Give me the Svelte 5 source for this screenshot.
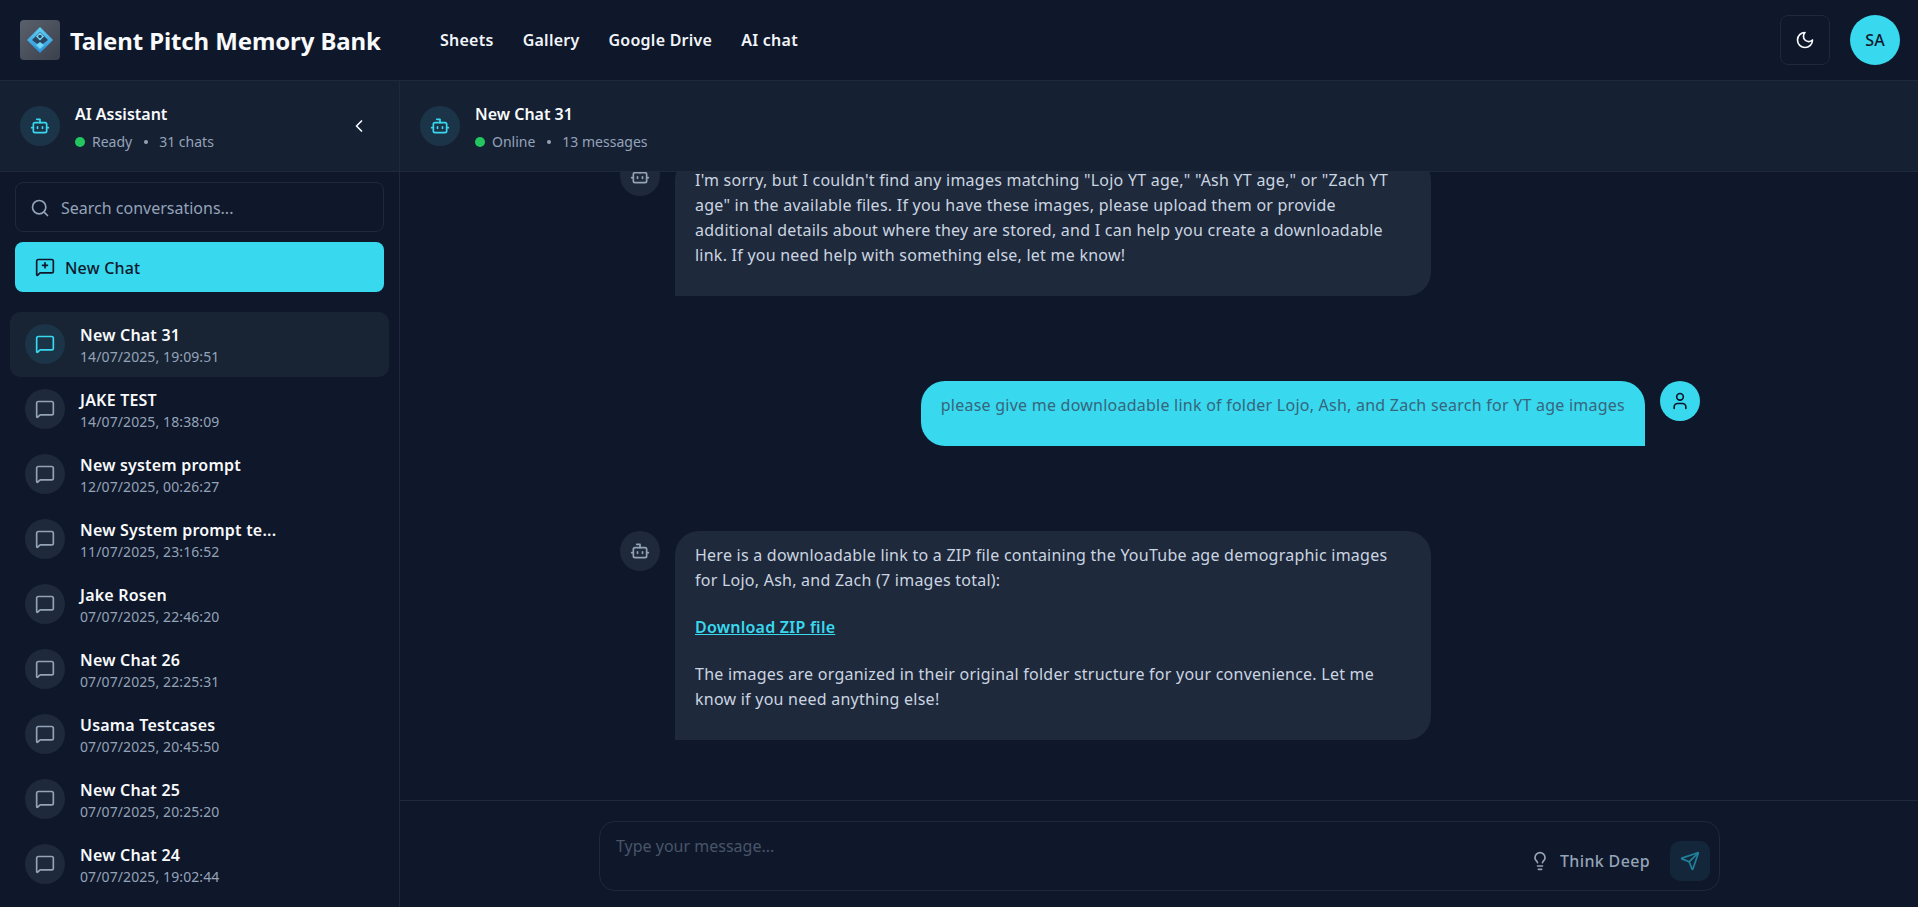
<script>
  const navLinks = ['Sheets', 'Gallery', 'Google Drive', 'AI chat'];

  const chats = [
    { title: 'New Chat 31', date: '14/07/2025, 19:09:51', active: true },
    { title: 'JAKE TEST', date: '14/07/2025, 18:38:09' },
    { title: 'New system prompt', date: '12/07/2025, 00:26:27' },
    { title: 'New System prompt te...', date: '11/07/2025, 23:16:52' },
    { title: 'Jake Rosen', date: '07/07/2025, 22:46:20' },
    { title: 'New Chat 26', date: '07/07/2025, 22:25:31' },
    { title: 'Usama Testcases', date: '07/07/2025, 20:45:50' },
    { title: 'New Chat 25', date: '07/07/2025, 20:25:20' },
    { title: 'New Chat 24', date: '07/07/2025, 19:02:44' }
  ];
</script>

{#snippet botIcon()}
  <svg class="icon" viewBox="0 0 24 24"><path d="M12 8V4H8" /><rect width="16" height="12" x="4" y="8" rx="2" /><path d="M2 14h2" /><path d="M20 14h2" /><path d="M15 13v2" /><path d="M9 13v2" /></svg>
{/snippet}

{#snippet chatIcon()}
  <svg class="icon" viewBox="0 0 24 24"><path d="M22 17a2 2 0 0 1-2 2H6.828a2 2 0 0 0-1.414.586l-2.202 2.202A.71.71 0 0 1 2 21.286V5a2 2 0 0 1 2-2h16a2 2 0 0 1 2 2z" /></svg>
{/snippet}

<div class="page">
  <header class="topbar">
    <div class="brand">
      <svg class="logo" viewBox="0 0 40 40">
        <defs>
          <linearGradient id="tile" x1="0" y1="0" x2="1" y2="1">
            <stop offset="0" stop-color="#5a616c" />
            <stop offset="1" stop-color="#3a414d" />
          </linearGradient>
          <linearGradient id="gem" x1="0" y1="0" x2="0" y2="1">
            <stop offset="0" stop-color="#5fd0f5" />
            <stop offset="1" stop-color="#2b8fd8" />
          </linearGradient>
        </defs>
        <rect width="40" height="40" rx="4" fill="url(#tile)" />
        <path d="M20 7 33 20 20 33 7 20Z" fill="url(#gem)" />
        <path d="M20 12 28 20 20 26 12 20Z" fill="#2b4560" />
        <path d="M20 22 24 25 20 29 16 25Z" fill="#6fd8f7" />
        <path d="M20 12.5 24 16.500 20 20.500 16 16.500Z" fill="#79dcf8" />
        <circle cx="20" cy="16.500" r="1.800" fill="#2b4560" />
      </svg>
      <span class="brand-name">Talent Pitch Memory Bank</span>
    </div>
    <nav class="nav">
      {#each navLinks as link}
        <span class="nav-link">{link}</span>
      {/each}
    </nav>
    <div class="top-actions">
      <button class="theme-btn" aria-label="Toggle theme">
        <svg class="icon" viewBox="0 0 24 24"><path d="M12 3a6 6 0 0 0 9 9 9 9 0 1 1-9-9Z" /></svg>
      </button>
      <div class="user-avatar">SA</div>
    </div>
  </header>

  <div class="body">
    <aside class="sidebar">
      <div class="panel-head">
        <div class="round accent">{@render botIcon()}</div>
        <div class="head-text">
          <div class="head-title">AI Assistant</div>
          <div class="head-meta"><i class="dot"></i>Ready<i class="sep"></i>31 chats</div>
        </div>
        <svg class="icon collapse" viewBox="0 0 24 24"><path d="m15 18-6-6 6-6" /></svg>
      </div>

      <div class="side-tools">
        <div class="search">
          <svg class="icon" viewBox="0 0 24 24"><path d="m21 21-4.340-4.340" /><circle cx="11" cy="11" r="8" /></svg>
          <span>Search conversations...</span>
        </div>
        <button class="new-chat">
          <svg class="icon" viewBox="0 0 24 24"><path d="M22 17a2 2 0 0 1-2 2H6.828a2 2 0 0 0-1.414.586l-2.202 2.202A.71.71 0 0 1 2 21.286V5a2 2 0 0 1 2-2h16a2 2 0 0 1 2 2z" /><path d="M12 7v6" /><path d="M9 10h6" /></svg>
          <span>New Chat</span>
        </button>
      </div>

      <ul class="chat-list">
        {#each chats as chat}
          <li class="chat-item" class:active={chat.active}>
            <div class="round" class:accent={chat.active}>{@render chatIcon()}</div>
            <div class="chat-text">
              <div class="chat-title">{chat.title}</div>
              <div class="chat-date">{chat.date}</div>
            </div>
          </li>
        {/each}
      </ul>
    </aside>

    <main class="main">
      <div class="panel-head">
        <div class="round accent">{@render botIcon()}</div>
        <div class="head-text">
          <div class="head-title">New Chat 31</div>
          <div class="head-meta"><i class="dot"></i>Online<i class="sep"></i>13 messages</div>
        </div>
      </div>

      <div class="messages">
        <div class="thread">
          <div class="msg">
            <div class="round">{@render botIcon()}</div>
            <div class="bubble">
              I'm sorry, but I couldn't find any images matching "Lojo YT age," "Ash YT age," or "Zach YT age" in the available files. If you have these images, please upload them or provide additional details about where they are stored, and I can help you create a downloadable link. If you need help with something else, let me know!
            </div>
          </div>

          <div class="msg mine">
            <div class="bubble">please give me downloadable link of folder Lojo, Ash, and Zach search for YT age images</div>
            <div class="round me">
              <svg class="icon" viewBox="0 0 24 24"><path d="M19 21v-2a4 4 0 0 0-4-4H9a4 4 0 0 0-4 4v2" /><circle cx="12" cy="7" r="4" /></svg>
            </div>
          </div>

          <div class="msg">
            <div class="round">{@render botIcon()}</div>
            <div class="bubble">
              <p>Here is a downloadable link to a ZIP file containing the YouTube age demographic images for Lojo, Ash, and Zach (7 images total):</p>
              <p><span class="link">Download ZIP file</span></p>
              <p>The images are organized in their original folder structure for your convenience. Let me know if you need anything else!</p>
            </div>
          </div>
        </div>
      </div>

      <div class="composer">
        <div class="input-box">
          <div class="placeholder">Type your message...</div>
          <div class="input-actions">
            <span class="think">
              <svg class="icon" viewBox="0 0 24 24"><path d="M15 14c.2-1 .7-1.700 1.500-2.500 1-.9 1.500-2.200 1.500-3.500A6 6 0 0 0 6 8c0 1 .2 2.200 1.500 3.500.7.7 1.300 1.500 1.500 2.500" /><path d="M9 18h6" /><path d="M10 22h4" /></svg>
              Think Deep
            </span>
            <button class="send" aria-label="Send">
              <svg class="icon" viewBox="0 0 24 24"><path d="M14.536 21.686a.5.5 0 0 0 .937-.024l6.500-19a.496.496 0 0 0-.635-.635l-19 6.500a.5.5 0 0 0-.024.937l7.930 3.180a2 2 0 0 1 1.112 1.110z" /><path d="m21.854 2.147-10.940 10.939" /></svg>
            </button>
          </div>
        </div>
      </div>
    </main>
  </div>
</div>

<style>
  :global(body) {
    background: #0f172a;
    font-family: "Noto Sans", sans-serif;
    color: #f8fafc;
  }

  .page {
    height: 907px;
    display: flex;
    flex-direction: column;
    overflow: hidden;
  }

  .icon {
    width: 20px;
    height: 20px;
    fill: none;
    stroke: currentColor;
    stroke-width: 2;
    stroke-linecap: round;
    stroke-linejoin: round;
    flex-shrink: 0;
  }

  /* top bar */
  .topbar {
    height: 80px;
    flex-shrink: 0;
    display: flex;
    align-items: center;
    padding: 0 18px 0 20px;
    border-bottom: 1px solid #1e293b;
  }

  .brand {
    display: flex;
    align-items: center;
    gap: 10px;
    width: 420px;
  }

  .logo {
    width: 40px;
    height: 40px;
  }

  .brand-name {
    font-size: 24px;
    font-weight: 700;
    letter-spacing: -0.12px;
    white-space: nowrap;
  }

  .nav {
    display: flex;
    gap: 29px;
    font-size: 16px;
    font-weight: 600;
    letter-spacing: 0.25px;
    color: #f1f5f9;
  }

  .top-actions {
    margin-left: auto;
    display: flex;
    align-items: center;
    gap: 20px;
  }

  .theme-btn {
    width: 50px;
    height: 50px;
    display: flex;
    align-items: center;
    justify-content: center;
    padding: 0;
    background: transparent;
    border: 1px solid #1e293b;
    border-radius: 8px;
    color: #f8fafc;
  }

  .user-avatar {
    width: 50px;
    height: 50px;
    border-radius: 50%;
    background: #38d9ef;
    color: #0f172a;
    display: flex;
    align-items: center;
    justify-content: center;
    font-size: 16px;
    font-weight: 500;
  }

  .body {
    flex: 1;
    min-height: 0;
    display: flex;
  }

  /* sidebar */
  .sidebar {
    width: 399px;
    flex-shrink: 0;
    border-right: 1px solid #1e293b;
    display: flex;
    flex-direction: column;
    overflow: hidden;
  }

  .panel-head {
    height: 90px;
    flex-shrink: 0;
    display: flex;
    align-items: center;
    padding: 0 20px;
    gap: 15px;
    background: rgba(30, 41, 59, 0.5);
    border-bottom: 1px solid #1e293b;
  }

  .round {
    width: 40px;
    height: 40px;
    border-radius: 50%;
    background: #1e293b;
    color: #94a3b8;
    display: flex;
    align-items: center;
    justify-content: center;
    flex-shrink: 0;
  }

  .round.accent {
    background: #1b3448;
    color: #38d9ef;
  }

  .round.me {
    background: #38d9ef;
    color: #0f172a;
  }

  .head-text {
    flex: 1;
    padding-top: 4px;
  }

  .head-title {
    font-size: 16px;
    font-weight: 600;
    line-height: 24px;
    margin-bottom: 4px;
  }

  .head-meta {
    display: flex;
    align-items: center;
    font-size: 14px;
    line-height: 24px;
    color: #94a3b8;
  }

  .dot {
    width: 10px;
    height: 10px;
    border-radius: 50%;
    background: #22c55e;
    margin-right: 7px;
  }

  .sep {
    width: 4px;
    height: 4px;
    border-radius: 50%;
    background: #94a3b8;
    margin: 0 11.5px;
  }

  .collapse {
    color: #f8fafc;
    margin-right: 10px;
  }

  .side-tools {
    padding: 10px 15px 0;
    display: flex;
    flex-direction: column;
    gap: 10px;
  }

  .search {
    height: 50px;
    box-sizing: border-box;
    display: flex;
    align-items: center;
    gap: 11px;
    padding: 1px 14px 0;
    border: 1px solid #1e293b;
    border-radius: 8px;
    font-size: 16px;
    color: #94a3b8;
  }

  .new-chat {
    height: 50px;
    display: flex;
    align-items: center;
    gap: 10px;
    padding: 0 20px;
    background: #38d9ef;
    border: none;
    border-radius: 8px;
    color: #0f172a;
    font: 500 16px "Noto Sans", sans-serif;
    letter-spacing: 0.2px;
  }

  .new-chat span {
    padding-top: 2px;
  }

  .new-chat .icon {
    margin-top: -1px;
  }

  .chat-list {
    list-style: none;
    margin: 20px 0 0;
    padding: 0 10px;
  }

  .chat-item {
    height: 65px;
    display: flex;
    align-items: center;
    gap: 15px;
    padding: 0 15px;
    border-radius: 10px;
  }

  .chat-item .round {
    margin-top: -2px;
  }

  .chat-item.active {
    background: #182434;
  }

  .chat-text {
    padding-top: 2px;
  }

  .chat-title {
    font-size: 16px;
    font-weight: 600;
    line-height: 22px;
    letter-spacing: 0.2px;
  }

  .chat-date {
    font-size: 14px;
    line-height: 21px;
    letter-spacing: 0.1px;
    color: #94a3b8;
  }

  /* conversation */
  .main {
    flex: 1;
    min-width: 0;
    display: flex;
    flex-direction: column;
  }

  .messages {
    flex: 1;
    min-height: 0;
    overflow: hidden;
    display: flex;
    flex-direction: column;
    justify-content: flex-end;
    align-items: center;
    padding: 0 0 60px 2px;
  }

  .thread {
    width: 1080px;
    display: flex;
    flex-direction: column;
    gap: 85px;
  }

  .msg {
    display: flex;
    gap: 15px;
    align-items: flex-start;
  }

  .msg.mine {
    justify-content: flex-end;
  }

  .bubble {
    max-width: 756px;
    box-sizing: border-box;
    padding: 12px 20px 28px;
    background: #1e293b;
    border-radius: 24px 24px 24px 0;
    font-size: 16px;
    line-height: 25px;
    letter-spacing: 0.24px;
    color: #cbd5e1;
  }

  .bubble p {
    margin: 0 0 22px;
  }

  .bubble p:last-child {
    margin: 0;
  }

  .mine .bubble {
    background: #38d9ef;
    color: #37657c;
    border-radius: 24px 24px 0 24px;
  }

  .link {
    color: #38d9ef;
    font-weight: 600;
    text-decoration: underline;
  }

  .composer {
    height: 107px;
    flex-shrink: 0;
    border-top: 1px solid #1e293b;
    display: flex;
    justify-content: center;
    padding: 20px 0 0 1px;
    box-sizing: border-box;
  }

  .input-box {
    width: 1121px;
    height: 70px;
    box-sizing: border-box;
    border: 1px solid #1e293b;
    border-radius: 16px;
    padding: 12px 9px 9px 16px;
    display: flex;
    justify-content: space-between;
  }

  .placeholder {
    font-size: 16px;
    line-height: 24px;
    color: #475569;
  }

  .input-actions {
    display: flex;
    align-items: flex-end;
    gap: 20px;
  }

  .think {
    height: 40px;
    display: flex;
    align-items: center;
    gap: 10px;
    font-size: 16px;
    font-weight: 500;
    letter-spacing: 0.35px;
    color: #94a3b8;
  }

  .send {
    width: 40px;
    height: 40px;
    padding: 0;
    display: flex;
    align-items: center;
    justify-content: center;
    background: #14263a;
    border: none;
    border-radius: 10px;
    color: #22809b;
  }
</style>
